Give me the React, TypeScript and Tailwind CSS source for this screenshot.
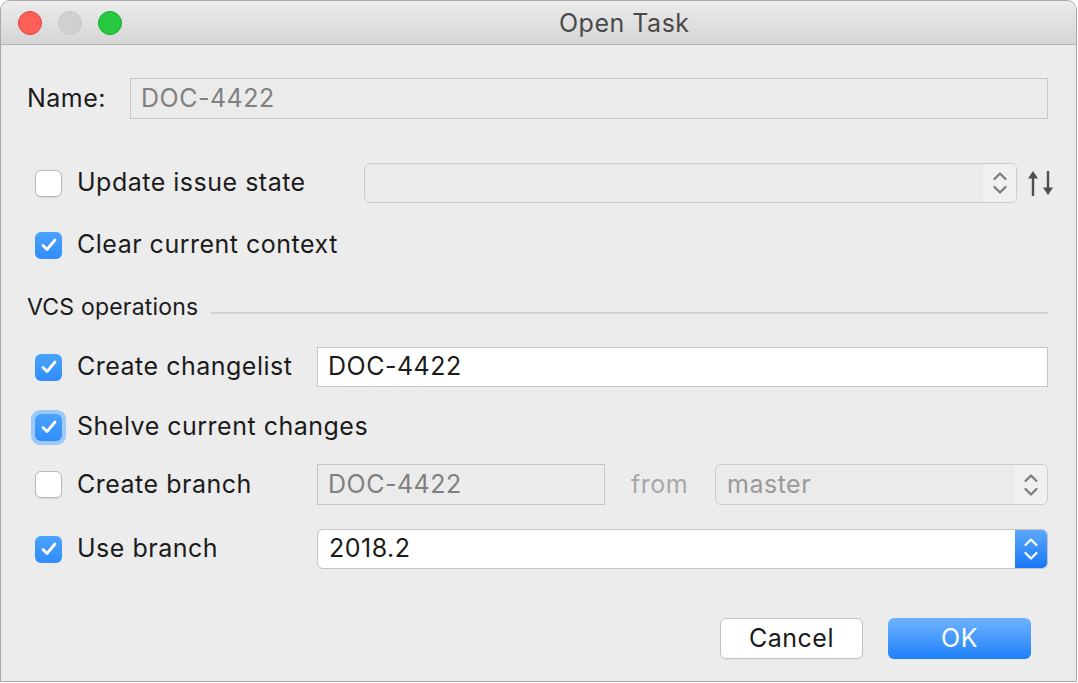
import React from 'react';

const font = { fontFamily: 'Inter, "Liberation Sans", Arial, sans-serif' };

function Check({ checked, focused }: { checked?: boolean; focused?: boolean }) {
  const box = checked ? (
    <div className="flex h-[27px] w-[27px] items-center justify-center rounded-[6px] bg-gradient-to-b from-[#4aa3fd] to-[#2f8cfb]">
      <svg width="18" height="16" viewBox="0 0 18 16" fill="none">
        <path d="M3 8.5 L7 12.5 L15 3" stroke="white" strokeWidth="2.8" strokeLinecap="round" strokeLinejoin="round" />
      </svg>
    </div>
  ) : (
    <div className="h-[27px] w-[27px] rounded-[6px] border border-[#b9b9b9] bg-white shadow-[0_1px_1px_rgba(0,0,0,0.08)]" />
  );
  if (focused) {
    return <div className="rounded-[9px] bg-[#9cc8fa] p-[4px]">{box}</div>;
  }
  return box;
}

function Chevrons({ color }: { color: string }) {
  return (
    <svg width="16" height="28" viewBox="0 0 16 28" fill="none">
      <path d="M2.5 10 L8 4.5 L13.5 10" stroke={color} strokeWidth="2.2" strokeLinecap="round" strokeLinejoin="round" />
      <path d="M2.5 18 L8 23.5 L13.5 18" stroke={color} strokeWidth="2.2" strokeLinecap="round" strokeLinejoin="round" />
    </svg>
  );
}

function Combo({ value, disabled, active, className }: { value?: string; disabled?: boolean; active?: boolean; className: string }) {
  return (
    <div
      className={`flex h-full items-stretch overflow-hidden rounded-[6px] border ${
        active ? 'border-[#c4c4c4] bg-white' : 'border-[#cdcdcd] bg-[#ebebeb]'
      } ${className}`}
    >
      <div className={`flex flex-1 items-center pl-[11px] ${disabled ? 'text-[#9a9a9a]' : 'text-[#1b1b1b]'}`}>{value}</div>
      {active ? (
        <div className="flex w-[32px] items-center justify-center bg-gradient-to-b from-[#5aa9fd] to-[#1676f6]">
          <Chevrons color="white" />
        </div>
      ) : (
        <div className="flex w-[33px] items-center justify-center bg-[#f0f0f0]">
          <Chevrons color="#7b7b7b" />
        </div>
      )}
    </div>
  );
}

export default function App() {
  return (
    <div className="h-[683px] w-[1078px] bg-white text-[25px] tracking-[0.5px]" style={font}>
      <div className="flex h-[682px] w-[1077px] flex-col overflow-hidden rounded-t-[10px] border border-[#a9a9a9] bg-[#ececec]">
        {/* title bar */}
        <div className="flex h-[44px] shrink-0 items-center border-b border-[#b6b6b6] bg-gradient-to-b from-[#ececec] to-[#d5d5d5]">
          <div className="flex items-center gap-[16px] pl-[17px]">
            <div className="h-[24px] w-[24px] rounded-full border border-[#e0443e] bg-[#fe5f57]" />
            <div className="h-[24px] w-[24px] rounded-full border border-[#c6c6c6] bg-[#d0d0d0]" />
            <div className="h-[24px] w-[24px] rounded-full border border-[#1aab29] bg-[#28c840]" />
          </div>
          <div className="pl-[437px] pt-[3px] text-[#4a4a4a]">Open Task</div>
        </div>

        {/* content */}
        <div className="flex flex-col pl-[26px] pr-[28px] text-[#1b1b1b]">
          <div className="mt-[33px] flex h-[41px] items-center">
            <div className="w-[103px] shrink-0">Name:</div>
            <div className="flex h-full flex-1 items-center border border-[#c6c6c6] bg-[#ebebeb] pl-[10px] text-[#808080]">DOC-4422</div>
          </div>

          <div className="mr-[-8px] mt-[44px] flex h-[40px] items-center">
            <div className="flex w-[337px] shrink-0 items-center pl-[8px]">
              <Check />
              <span className="ml-[15px]">Update issue state</span>
            </div>
            <Combo className="w-[653px] shrink-0" disabled />
            <svg className="ml-[8px] shrink-0" width="30" height="30" viewBox="0 0 30 30" fill="none">
              <path d="M8 28 V5" stroke="#4f4f4f" strokeWidth="2.4" />
              <path d="M3 10.5 L8 3 L13 10.5 Z" fill="#4f4f4f" />
              <path d="M23 3 V25" stroke="#4f4f4f" strokeWidth="2.4" />
              <path d="M18 19.5 L23 27 L28 19.5 Z" fill="#4f4f4f" />
            </svg>
          </div>

          <div className="mt-[22px] flex h-[40px] items-center pl-[8px]">
            <Check checked />
            <span className="ml-[15px]">Clear current context</span>
          </div>

          <div className="mt-[27px] flex h-[30px] items-center">
            <span className="text-[23px] tracking-[0.2px]">VCS operations</span>
            <div className="ml-[13px] mt-[12px] h-[2px] flex-1 bg-[#d2d2d2]" />
          </div>

          <div className="mt-[25px] flex h-[40px] items-center">
            <div className="flex w-[290px] shrink-0 items-center pl-[8px]">
              <Check checked />
              <span className="ml-[15px]">Create changelist</span>
            </div>
            <div className="flex h-full flex-1 items-center border border-[#c6c6c6] bg-white pl-[10px]">DOC-4422</div>
          </div>

          <div className="mt-[20px] flex h-[40px] items-center pl-[4px]">
            <Check checked focused />
            <span className="ml-[11px]">Shelve current changes</span>
          </div>

          <div className="mt-[17px] flex h-[41px] items-center">
            <div className="flex w-[290px] shrink-0 items-center pl-[8px]">
              <Check />
              <span className="ml-[15px]">Create branch</span>
            </div>
            <div className="flex h-full w-[288px] shrink-0 items-center border border-[#c6c6c6] bg-[#ebebeb] pl-[10px] text-[#808080]">DOC-4422</div>
            <div className="w-[110px] shrink-0 pl-[26px] text-[#a8a8a8]">from</div>
            <Combo className="flex-1" value="master" disabled />
          </div>

          <div className="mt-[24px] flex h-[40px] items-center">
            <div className="flex w-[290px] shrink-0 items-center pl-[8px]">
              <Check checked />
              <span className="ml-[15px]">Use branch</span>
            </div>
            <Combo className="flex-1" value="2018.2" active />
          </div>

          <div className="mt-[49px] flex h-[41px] items-center justify-end gap-[25px] pr-[17px]">
            <div className="flex h-full w-[143px] items-center justify-center rounded-[6px] border border-[#c2c2c2] bg-white shadow-[0_1px_1px_rgba(0,0,0,0.06)]">Cancel</div>
            <div className="flex h-full w-[143px] items-center justify-center rounded-[6px] bg-gradient-to-b from-[#6cb3fe] to-[#1a7ff9] text-white">OK</div>
          </div>
        </div>
      </div>
    </div>
  );
}
